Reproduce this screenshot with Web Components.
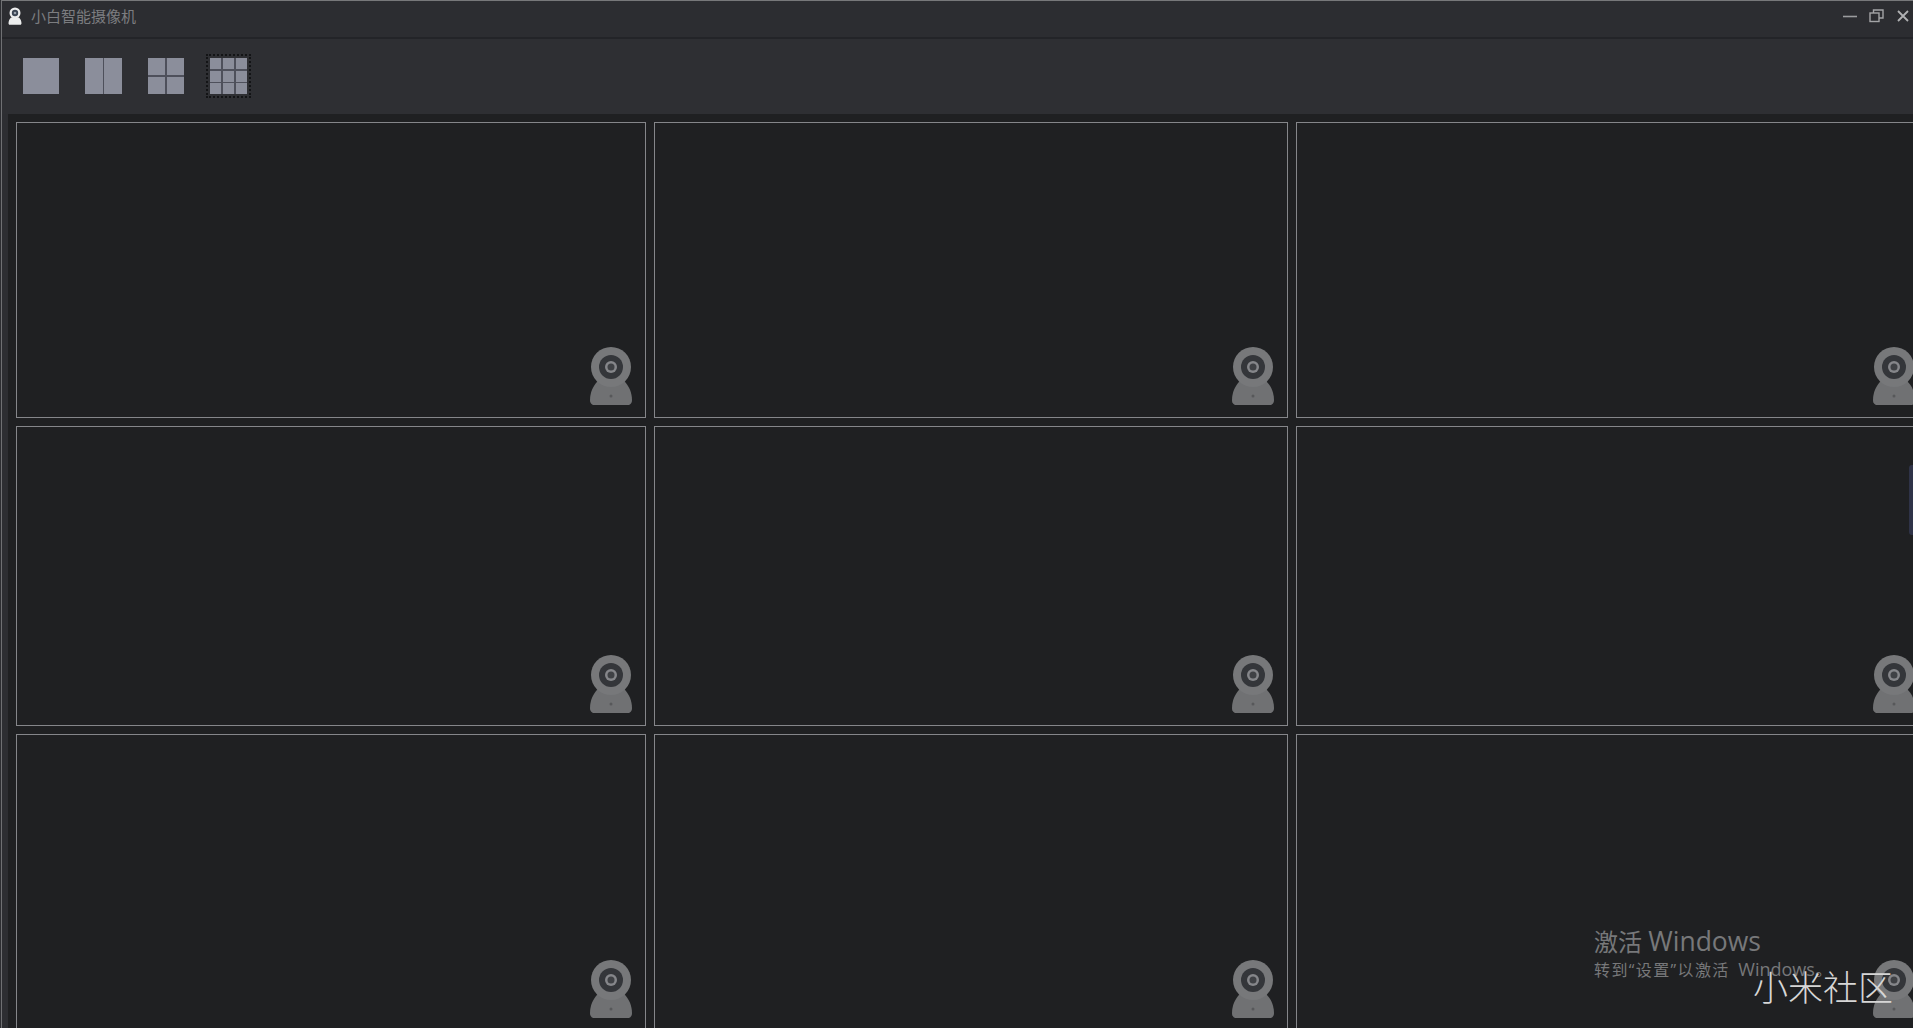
<!DOCTYPE html>
<html lang="zh">
<head>
<meta charset="utf-8">
<title>小白智能摄像机</title>
<style>
  html, body { margin: 0; height: 100%; overflow: hidden; background: #1f2022; }
  body { font-family: "Noto Sans CJK SC", "Liberation Sans", sans-serif; }
</style>
</head>
<body>
<app-window>
  <title-bar slot="title">小白智能摄像机</title-bar>
  <layout-toolbar slot="tools"></layout-toolbar>
  <camera-grid></camera-grid>
  <activation-mark slot="over"></activation-mark>
</app-window>

<script>
class AppWindow extends HTMLElement {
  constructor() {
    super();
    this.attachShadow({ mode: 'open' }).innerHTML = `
    <style>
      :host { display: block; position: relative; width: 1913px; height: 1028px; overflow: hidden; background: #2d2e32; }
      .frame { display: flex; flex-direction: column; height: 100%; box-sizing: border-box; margin-left: 1px; padding-top: 1px; border-left: 1px solid #6f7073; border-top: 1px solid #77787a; }
      .body { flex: 1; min-height: 0; margin-left: 6px; overflow: hidden; }
    </style>
    <div class="frame">
      <slot name="title"></slot>
      <slot name="tools"></slot>
      <div class="body"><slot></slot></div>
    </div>
    <slot name="over"></slot>
    `;
  }
}

class TitleBar extends HTMLElement {
  constructor() {
    super();
    this.attachShadow({ mode: 'open' }).innerHTML = `
    <style>
      :host { display: flex; align-items: center; height: 37px; box-sizing: border-box; padding: 0 0 7px 6px; background: #2c2d31; border-bottom: 2px solid #232428; color: #7c7d80; font-size: 15px; }
      .logo { width: 14px; height: 18px; margin-right: 9px; flex: none; }
      .text { flex: 1; line-height: 20px; }
      .ctl { display: flex; align-items: center; padding-right: 4px; }
      .ctl svg + svg { margin-left: 12px; }
      .ctl svg:last-child { margin-left: 13px; }
      svg { display: block; }
    </style>
    <svg class="logo" viewBox="0 0 14 18">
      <circle cx="7" cy="6" r="5.500" fill="#eceded"/>
      <circle cx="7" cy="6" r="3.200" fill="#3a4452"/>
      <circle cx="7" cy="6" r="1.300" fill="#9aa2ac"/>
      <path d="M3 10.500h8c1.500 1.500 2.500 3.500 2.500 5.800 0 .9-.5 1.500-1.200 1.500H1.700c-.7 0-1.200-.6-1.200-1.500 0-2.300 1-4.300 2.500-5.800z" fill="#eceded"/>
    </svg>
    <span class="text"><slot></slot></span>
    <div class="ctl">
      <svg width="14" height="14" viewBox="0 0 14 14"><path d="M0 7.500h14" stroke="#9b9c9e" stroke-width="1.600"/></svg>
      <svg width="15" height="14" viewBox="0 0 15 14" fill="none" stroke="#a3a4a6" stroke-width="1.400"><rect x="1" y="4" width="9" height="8.500"/><path d="M4.500 4V1h9.500v8h-4"/></svg>
      <svg width="12" height="12" viewBox="0 0 12 12"><path d="M1 1l10 10M11 1L1 11" stroke="#b0b1b3" stroke-width="1.800"/></svg>
    </div>
    `;
  }
}

class LayoutButton extends HTMLElement {
  constructor() {
    super();
    this.attachShadow({ mode: 'open' });
  }

  connectedCallback() {
    const cols = Number(this.getAttribute('cols')) || 1;
    const rows = Number(this.getAttribute('rows')) || 1;
    const w = Number(this.getAttribute('w')) || 36;
    const panes = '<i></i>'.repeat(cols * rows);
    this.shadowRoot.innerHTML = `
    <style>
      :host { display: block; box-sizing: border-box; padding: 3px; }
      :host([focused]) { outline: 2px dotted #131416; outline-offset: -1px; }
      .grid { display: grid; grid-template-columns: repeat(${cols}, 1fr); grid-template-rows: repeat(${rows}, 1fr); gap: 1.500px; width: ${w}px; height: 36px; background: #4e505b; }
      i { background: #8b8e9b; }
    </style>
    <div class="grid">${panes}</div>
    `;
  }
}

class LayoutToolbar extends HTMLElement {
  constructor() {
    super();
    this.attachShadow({ mode: 'open' }).innerHTML = `
    <style>
      :host { display: flex; align-items: center; gap: 20px; height: 75px; box-sizing: border-box; padding: 0 0 1px 18px; background: #2e2f33; }
    </style>
    <layout-button></layout-button>
    <layout-button cols="2" w="37"></layout-button>
    <layout-button cols="2" rows="2"></layout-button>
    <layout-button cols="3" rows="3" w="37" focused></layout-button>
    `;
  }
}

class CameraCell extends HTMLElement {
  constructor() {
    super();
    this.attachShadow({ mode: 'open' }).innerHTML = `
    <style>
      :host { display: flex; align-items: flex-end; justify-content: flex-end; box-sizing: border-box; min-width: 0; padding: 0 13px 12px 0; border: 1px solid #85868a; background: #1f2022; }
      svg { display: block; }
    </style>
    <svg width="42" height="58" viewBox="0 0 42 58">
      <path d="M8 34C3 38.500 0 46 0 53c0 3.500 2 5 4 5h34c2 0 4-1.500 4-5 0-7-3-14.500-8-19z" fill="#707173"/>
      <circle cx="21" cy="20" r="20" fill="#77787a"/>
      <circle cx="21" cy="20" r="12" fill="#34363a"/>
      <circle cx="21" cy="20" r="6" fill="#85868a"/>
      <circle cx="21" cy="20" r="3.500" fill="#3f4145"/>
      <circle cx="21" cy="49" r="1.500" fill="#57585a"/>
    </svg>
    `;
  }
}

class CameraGrid extends HTMLElement {
  constructor() {
    super();
    const cells = '<camera-cell></camera-cell>'.repeat(9);
    this.attachShadow({ mode: 'open' }).innerHTML = `
    <style>
      :host { display: grid; grid-template-columns: 630px 634px 633px; grid-template-rows: 296px 300px 297px; gap: 8px; padding: 8px 0 0 8px; background: #1f2022; width: 1920px; height: 100%; box-sizing: border-box; }
    </style>
    ${cells}
    `;
  }
}

class ActivationMark extends HTMLElement {
  constructor() {
    super();
    this.attachShadow({ mode: 'open' }).innerHTML = `
    <style>
      :host { display: block; position: absolute; inset: 0; pointer-events: none; }
      .win { position: absolute; left: 1594px; top: 925px; color: #77787a; font-family: "Open Sans", "Noto Sans CJK SC", sans-serif; }
      .win b { display: block; font-weight: 400; font-size: 24px; line-height: 33px; white-space: nowrap; }
      .win b em { font-style: normal; font-size: 26.500px; }
      .win div { font-size: 16px; line-height: 22px; white-space: nowrap; letter-spacing: 1.400px; word-spacing: 3px; }
      .win div em { font-style: normal; font-size: 18px; letter-spacing: 0; }
      .mi { position: absolute; left: 1753px; top: 964px; color: #d6d6d6; font-size: 35px; line-height: 44px; font-weight: 300; font-family: "Noto Sans CJK SC", sans-serif; white-space: nowrap; }
      .tab { position: absolute; left: 1909px; top: 465px; width: 4px; height: 70px; border-radius: 3px 0 0 3px; background: #2f3348; }
    </style>
    <div class="win"><b>激活 <em>Windows</em></b><div>转到“设置”以激活 <em>Windows。</em></div></div>
    <div class="mi">小米社区</div>
    <div class="tab"></div>
    `;
  }
}

customElements.define('app-window', AppWindow);
customElements.define('title-bar', TitleBar);
customElements.define('layout-button', LayoutButton);
customElements.define('layout-toolbar', LayoutToolbar);
customElements.define('camera-cell', CameraCell);
customElements.define('camera-grid', CameraGrid);
customElements.define('activation-mark', ActivationMark);
</script>
</body>
</html>
